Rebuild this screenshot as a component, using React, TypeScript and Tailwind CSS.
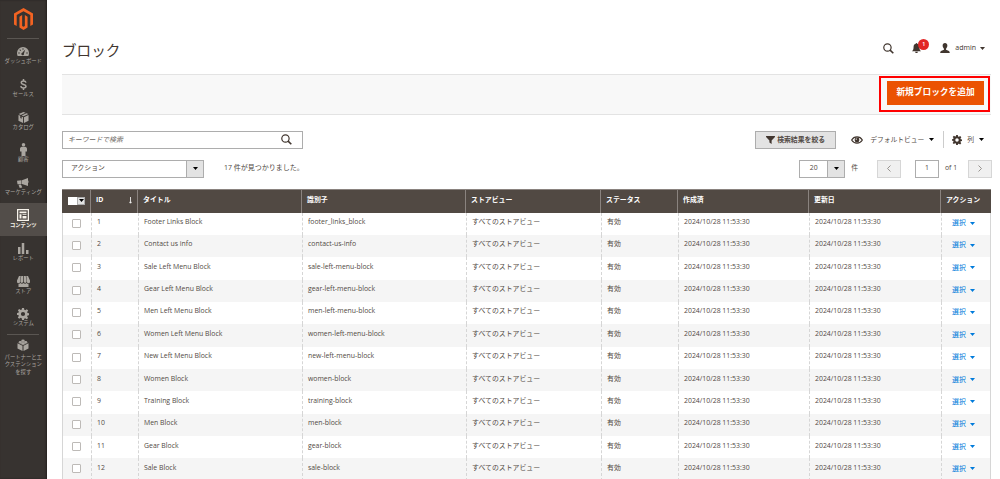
import type { ReactNode } from 'react';

type IconProps = { className?: string };

const MagentoLogo = () => (
  <svg viewBox="0 0 38 44" className="h-[22px] w-[19px]" fill="#f26322">
    <path d="M19 0 38 11v22l-5.4 3.1V14.2L19 6.3 5.4 14.2v21.9L0 33V11z" />
    <path d="m21.7 36.100-2.700 1.600-2.700-1.600V14.200l-5.400 3.100v21.900L19 44l8.100-4.800V17.300l-5.400-3.100z" />
  </svg>
);

const Dashboard = ({ className }: IconProps) => (
  <svg viewBox="0 0 24 18" className={className} fill="currentColor">
    <path fillRule="evenodd" d="M12 0a12 12 0 0 1 12 12c0 2-.4 4-1.200 6H1.200A14 14 0 0 1 0 12 12 12 0 0 1 12 0zm4.500 5-6 6.500a2.600 2.600 0 1 0 3.300 1.800zM11 2.500v3h2v-3zM2.500 11v2h3v-2zm16 0v2h3v-2zM4.700 6.100l2.100 2.100 1.400-1.400-2.100-2.100z" />
  </svg>
);

const Dollar = ({ className }: IconProps) => (
  <svg viewBox="0 0 14 22" className={className} fill="none" stroke="currentColor" strokeWidth="3">
    <path d="M12 7.200C11.500 5 9.600 4 7 4 4.400 4 2.500 5.200 2.500 7.300c0 5 9.500 2.400 9.500 7.300 0 2.200-2 3.400-5 3.400-3 0-5-1.200-5.400-3.600M7 0v4M7 18v4" />
  </svg>
);

const Cube = ({ className }: IconProps) => (
  <svg viewBox="0 0 24 24" className={className} fill="currentColor">
    <path d="m12 0 4.500 1.900L6 6.600 1.500 4.500zM18.500 2.800l4 1.700L12 9.300 8 7.500zM1 6.500l4 1.900v4.800l3 1.300V9.800l3 1.400V24L1 19.200zM23 6.500v12.700L13 24V11.200z" />
  </svg>
);

const Brick = ({ className }: IconProps) => (
  <svg viewBox="0 0 24 24" className={className} fill="currentColor">
    <path d="m12 3 10 4.600-10 4.800L2 7.600z" opacity=".75" />
    <path d="M1 8.500l10 4.900V24L1 19zM23 8.500V19l-10 5V13.400z" />
    <ellipse cx="12" cy="3" rx="3.500" ry="2" />
    <ellipse cx="6.500" cy="6" rx="3" ry="1.800" />
    <ellipse cx="17.500" cy="6" rx="3" ry="1.800" />
    <ellipse cx="12" cy="8.800" rx="3.200" ry="1.800" />
  </svg>
);

const Person = ({ className }: IconProps) => (
  <svg viewBox="0 0 14 26" className={className} fill="currentColor">
    <circle cx="7" cy="3.500" r="3.500" />
    <path d="M4 7.500h6c2.500 0 4 2 4 4.500v5h-3v9H3v-9H0v-5c0-2.500 1.500-4.500 4-4.500z" />
  </svg>
);

const Megaphone = ({ className }: IconProps) => (
  <svg viewBox="0 0 24 20" className={className} fill="currentColor">
    <path d="M22 0v16L10 12V4.500zM0 5.500 9 4.700v7.200L1 12.400zM3 13.500l5-.3L10.500 19l-5 1zM23 5.500h1v4h-1z" />
  </svg>
);

const Content = ({ className }: IconProps) => (
  <svg viewBox="0 0 24 24" className={className} fill="currentColor">
    <path fillRule="evenodd" d="M0 0h24v24H0zM2.500 2.500v19h19v-19z" />
    <path d="M5 5h14v3.500H5zM5 10.500h4V19H5zM11 10.500h8V12h-8zM11 14h8v5h-8z" />
  </svg>
);

const Bars = ({ className }: IconProps) => (
  <svg viewBox="0 0 22 22" className={className} fill="currentColor">
    <path d="M0 8h5v14H0zM7.500 0h5v22h-5zM16 14h5v8h-5z" />
  </svg>
);

const Store = ({ className }: IconProps) => (
  <svg viewBox="0 0 26 22" className={className} fill="currentColor">
    <path d="M4 0h3.500L6 9v2.500a3 3 0 0 1-6 0V9zM8.500 0h3.800v11.500a2.800 2.800 0 0 1-5.500 0V9zM13.700 0h3.800l1.700 9v2.500a2.800 2.800 0 0 1-5.500 0zM18.500 0H22l4 9v2.500a3 3 0 0 1-6 0V9z" />
    <path d="M3 16c2 0 3-.8 3.800-1.800 1.500 2 4.700 2 6.200 0 1.500 2 4.700 2 6.200 0C20 15.200 21 16 23 16v6H3z" />
  </svg>
);

const Gear = ({ className }: IconProps) => (
  <svg viewBox="0 0 24 24" className={className} fill="currentColor">
    <path fillRule="evenodd" d="M10 0h4l.6 3.600 2 .8L19.600 2.300l2.800 2.800-2.100 3 .8 2 2.900.4v3.800l-3 .6-.8 2 2 3-2.800 2.800-3-2-2 .8L14 24h-4l-.6-3.500-2-.8-3 2-2.800-2.800 2-3-.8-2L0 14v-4l2.900-.6.8-2-2-2.800 2.800-2.800 3 2 2-.8zM12 7.800a4.200 4.200 0 1 0 0 8.400 4.200 4.200 0 0 0 0-8.400z" />
  </svg>
);

const SearchIcon = ({ className }: IconProps) => (
  <svg viewBox="0 0 24 24" className={className} fill="none" stroke="currentColor">
    <circle cx="9.700" cy="9.700" r="8" strokeWidth="2.600" />
    <path d="m15.500 15.500 7 7" strokeWidth="3.400" />
  </svg>
);

const Bell = ({ className }: IconProps) => (
  <svg viewBox="0 0 20 22" className={className} fill="currentColor">
    <path d="M10 0c1 0 1.800.8 1.800 1.700C15 2.500 16.500 5 16.500 8.500c0 5 1.200 7.500 3.500 9.500H0c2.300-2 3.500-4.500 3.500-9.500C3.500 5 5 2.500 8.200 1.700 8.200.8 9 0 10 0zM7 19.200h6a3 3 0 0 1-6 0z" />
  </svg>
);

const UserIcon = ({ className }: IconProps) => (
  <svg viewBox="0 0 22 22" className={className} fill="currentColor">
    <path d="M11 0c3.200 0 5.200 2.300 5.200 5.700 0 3-1.300 5.600-2.900 6.800v2.300c3 1.200 8.200 2 8.200 7.200H.5c0-5.200 5.200-6 8.200-7.200v-2.300c-1.600-1.200-2.900-3.800-2.900-6.800C5.800 2.300 7.800 0 11 0z" />
  </svg>
);

const Funnel = ({ className }: IconProps) => (
  <svg viewBox="0 0 20 18" className={className} fill="currentColor">
    <path d="M0 0h20v2l-7.500 8v8l-5-3.500V10L0 2z" />
  </svg>
);

const Eye = ({ className }: IconProps) => (
  <svg viewBox="0 0 24 16" className={className}>
    <path d="M1.300 8C6-.3 18-.3 22.700 8 18 16.300 6 16.300 1.300 8z" fill="none" stroke="currentColor" strokeWidth="2.400" />
    <circle cx="12" cy="8" r="4.800" fill="currentColor" />
    <circle cx="10.500" cy="6.200" r="1.400" fill="white" />
  </svg>
);

const Caret = ({ className }: IconProps) => (
  <svg viewBox="0 0 10 6" className={`h-[3px] w-[5px] shrink-0 ${className ?? ''}`} fill="currentColor">
    <path d="M0 0h10L5 6z" />
  </svg>
);

const Chevron = ({ className }: IconProps) => (
  <svg viewBox="0 0 8 14" className={`h-[7px] w-1 ${className ?? ''}`} fill="none" stroke="#8d8985" strokeWidth="1.800">
    <path d="M7 1 1 7l6 6" />
  </svg>
);

type MenuItem = { label: string; icon: ReactNode; active?: boolean };

const menu: MenuItem[] = [
  { label: 'ダッシュボード', icon: <Dashboard className="h-[9px] w-3" /> },
  { label: 'セールス', icon: <Dollar className="h-[11px] w-[7px]" /> },
  { label: 'カタログ', icon: <Cube className="h-[11px] w-[11px]" /> },
  { label: '顧客', icon: <Person className="h-[13px] w-[7px]" /> },
  { label: 'マーケティング', icon: <Megaphone className="h-[10px] w-3" /> },
  { label: 'コンテンツ', icon: <Content className="h-3 w-3" />, active: true },
  { label: 'レポート', icon: <Bars className="h-[11px] w-[11px]" /> },
  { label: 'ストア', icon: <Store className="h-[11px] w-[13px]" /> },
  { label: 'システム', icon: <Gear className="h-3 w-3" /> },
];

const blocks = [
  { title: 'Footer Links Block', identifier: 'footer_links_block' },
  { title: 'Contact us info', identifier: 'contact-us-info' },
  { title: 'Sale Left Menu Block', identifier: 'sale-left-menu-block' },
  { title: 'Gear Left Menu Block', identifier: 'gear-left-menu-block' },
  { title: 'Men Left Menu Block', identifier: 'men-left-menu-block' },
  { title: 'Women Left Menu Block', identifier: 'women-left-menu-block' },
  { title: 'New Left Menu Block', identifier: 'new-left-menu-block' },
  { title: 'Women Block', identifier: 'women-block' },
  { title: 'Training Block', identifier: 'training-block' },
  { title: 'Men Block', identifier: 'men-block' },
  { title: 'Gear Block', identifier: 'gear-block' },
  { title: 'Sale Block', identifier: 'sale-block' },
];

const columns = 'grid grid-cols-[28px_47px_164px_164px_135px_77px_131px_132px_51px]';

const Sidebar = () => (
  <aside className="flex w-[46.500px] shrink-0 flex-col items-center bg-[#373330] text-[#aaa6a0] shadow-[inset_-1px_0_2px_#25211f]">
    <div className="flex h-[39px] w-full flex-col items-center pt-2">
      <MagentoLogo />
      <div className="mt-2 h-px w-8 bg-[#5a5652]" />
    </div>
    {menu.map(item => (
      <div
        key={item.label}
        className={`flex h-[32.800px] w-full shrink-0 flex-col items-center ${item.active ? 'bg-[#524d49] font-semibold text-[#f7f3eb]' : ''}`}
      >
        <div className="mt-[6px] flex h-[13px] items-center">{item.icon}</div>
        <span className="whitespace-nowrap text-[5.350px] leading-[7px]">{item.label}</span>
      </div>
    ))}
    <div className="h-px w-8 shrink-0 bg-[#5a5652]" />
    <Brick className="mt-[4px] h-3 w-3 shrink-0" />
    <div className="mt-[3px] text-center text-[5.350px] leading-[7.200px] whitespace-nowrap">
      パートナーとエ
      <br />
      クステンション
      <br />
      を探す
    </div>
  </aside>
);

const Header = () => (
  <header className="flex h-[74px] items-center justify-between pr-[7px] pt-[22px]">
    <h1 className="pt-[3px] text-[14.600px] leading-5 text-[#41362f]">ブロック</h1>
    <div className="flex items-center text-[#41362f]">
      <SearchIcon className="mr-[18px] h-[11px] w-[11px]" />
      <div className="relative mr-[19px]">
        <Bell className="h-[10px] w-[9px]" />
        <span className="absolute -top-[4px] left-[6px] flex h-[11px] w-[11px] items-center justify-center rounded-full bg-[#e22626] text-[6px] font-semibold text-white">
          1
        </span>
      </div>
      <UserIcon className="mr-[5px] h-[10px] w-[10px]" />
      <span className="mr-1 text-[7px] leading-[10px]">admin</span>
      <Caret />
    </div>
  </header>
);

const Toolbar = () => (
  <>
    <div className="mt-[16px] flex h-[17.500px] items-center">
      <div className="flex h-full w-[241px] items-center justify-between border border-[#adadad] pr-[10px] pl-[5px]">
        <span className="text-[6.850px] text-[#6b6661] italic">キーワードで検索</span>
        <SearchIcon className="h-[11px] w-[11px] text-[#41362f]" />
      </div>
      <button className="ml-auto flex h-full w-[81px] items-center justify-center border border-[#adadad] bg-[#e3e3e3] text-[6.850px] font-semibold text-[#514943]">
        <Funnel className="mr-[2px] h-2 w-[9px] text-[#41362f]" />
        検索結果を絞る
      </button>
      <Eye className="ml-[15px] h-2 w-3 text-[#41362f]" />
      <span className="ml-[7px] text-[6.750px]">デフォルトビュー</span>
      <Caret className="ml-[5px] text-black" />
      <div className="ml-[9px] h-[17px] w-px bg-[#ccc]" />
      <Gear className="ml-[8px] h-[10px] w-[10px] text-[#41362f]" />
      <span className="ml-[5px] text-[6.850px]">列</span>
      <Caret className="mr-[8px] ml-[5px] text-black" />
    </div>
    <div className="mt-[11px] flex h-[18px] items-center text-[6.850px]">
      <div className="flex h-full w-[142px] border border-[#adadad]">
        <span className="flex flex-1 items-center pl-2">アクション</span>
        <span className="flex w-[17px] items-center justify-center border-l border-[#adadad] bg-[#e3e3e3] text-black">
          <Caret />
        </span>
      </div>
      <span className="ml-5 text-[7px]">17 件が見つかりました。</span>
      <div className="ml-auto flex h-full w-[46px] border border-[#adadad]">
        <span className="flex flex-1 items-center justify-center">20</span>
        <span className="flex w-[17px] items-center justify-center border-l border-[#adadad] bg-[#e3e3e3] text-black">
          <Caret />
        </span>
      </div>
      <span className="ml-[6px]">件</span>
      <button className="ml-[19px] flex h-full w-6 items-center justify-center border border-[#d6d6d6] bg-[#f0f0f0]">
        <Chevron />
      </button>
      <span className="ml-[14px] flex h-full w-6 items-center justify-center border border-[#adadad]">1</span>
      <span className="mr-[10px] ml-[6px] w-[13px] whitespace-nowrap">of 1</span>
      <button className="flex h-full w-6 items-center justify-center border border-[#d6d6d6] bg-[#f0f0f0]">
        <Chevron className="rotate-180" />
      </button>
    </div>
  </>
);

const HeadCell = ({ children }: { children: ReactNode }) => (
  <div className="flex justify-between border-l border-[#8a837f] pt-[5px] pr-[5px] pl-[5px] leading-[10px] whitespace-nowrap">
    {children}
  </div>
);

const Cell = ({ children }: { children: ReactNode }) => (
  <div className="border-l border-dashed border-[#d6d6d6] pt-[4.500px] pl-[5px] leading-[10px] whitespace-nowrap">
    {children}
  </div>
);

const Grid = () => (
  <div className="mt-[11px] w-[929px] text-[6.900px]">
    <div className={`${columns} h-6 border-t border-[#8a837f] bg-[#514943] font-bold text-white`}>
      <div className="flex items-start pt-[7px] pl-[6px]">
        <span className="flex h-2 w-[17px] bg-white">
          <span className="ml-auto flex w-2 items-center justify-center border border-[#adadad] bg-[#e3e3e3] text-black">
            <Caret />
          </span>
        </span>
      </div>
      <HeadCell>
        <span>ID</span>
        <svg viewBox="0 0 6 14" className="mt-[2px] h-[7px] w-[3px]" fill="none" stroke="currentColor" strokeWidth="1.600">
          <path d="M3 0v12M.5 9.500 3 12.500l2.500-3" />
        </svg>
      </HeadCell>
      <HeadCell>タイトル</HeadCell>
      <HeadCell>識別子</HeadCell>
      <HeadCell>ストアビュー</HeadCell>
      <HeadCell>ステータス</HeadCell>
      <HeadCell>作成済</HeadCell>
      <HeadCell>更新日</HeadCell>
      <HeadCell>アクション</HeadCell>
    </div>
    {blocks.map((block, i) => (
      <div
        key={block.identifier}
        className={`${columns} h-[22.360px] border-r border-l border-[#d6d6d6] ${i % 2 ? 'bg-[#f5f5f5]' : 'bg-white'}`}
      >
        <div className="pt-[6px] pl-[9px]">
          <div className="h-[9px] w-[9px] rounded-[1px] border border-[#bdbab7] bg-white" />
        </div>
        <Cell>{i + 1}</Cell>
        <Cell>{block.title}</Cell>
        <Cell>{block.identifier}</Cell>
        <Cell>すべてのストアビュー</Cell>
        <Cell>有効</Cell>
        <Cell>2024/10/28 11:53:30</Cell>
        <Cell>2024/10/28 11:53:30</Cell>
        <Cell>
          <span className="flex items-center pt-[1px] pl-[5px] text-[#007bdb]">
            選択
            <Caret className="ml-1" />
          </span>
        </Cell>
      </div>
    ))}
  </div>
);

export default function App() {
  return (
    <div className="flex h-[479px] w-[1000px] overflow-hidden bg-white font-['Open_Sans','Noto_Sans_CJK_JP',sans-serif] text-[#41362f]">
      <Sidebar />
      <main className="flex-1 pr-2 pl-[15.500px] text-[#514943]">
        <Header />
        <div className="flex h-[41px] w-[929px] items-start justify-end border-y border-[#e3e3e3] bg-[#f8f8f8] pt-[1px]">
          <div className="mr-px h-[36px] w-[111px] border-2 border-[#f00] px-[6px] py-1">
            <button className="flex h-[24px] w-[97px] -translate-y-px items-center justify-center bg-[#eb5202] text-[8.700px] font-semibold whitespace-nowrap text-white">
              新規ブロックを追加
            </button>
          </div>
        </div>
        <Toolbar />
        <Grid />
      </main>
    </div>
  );
}
